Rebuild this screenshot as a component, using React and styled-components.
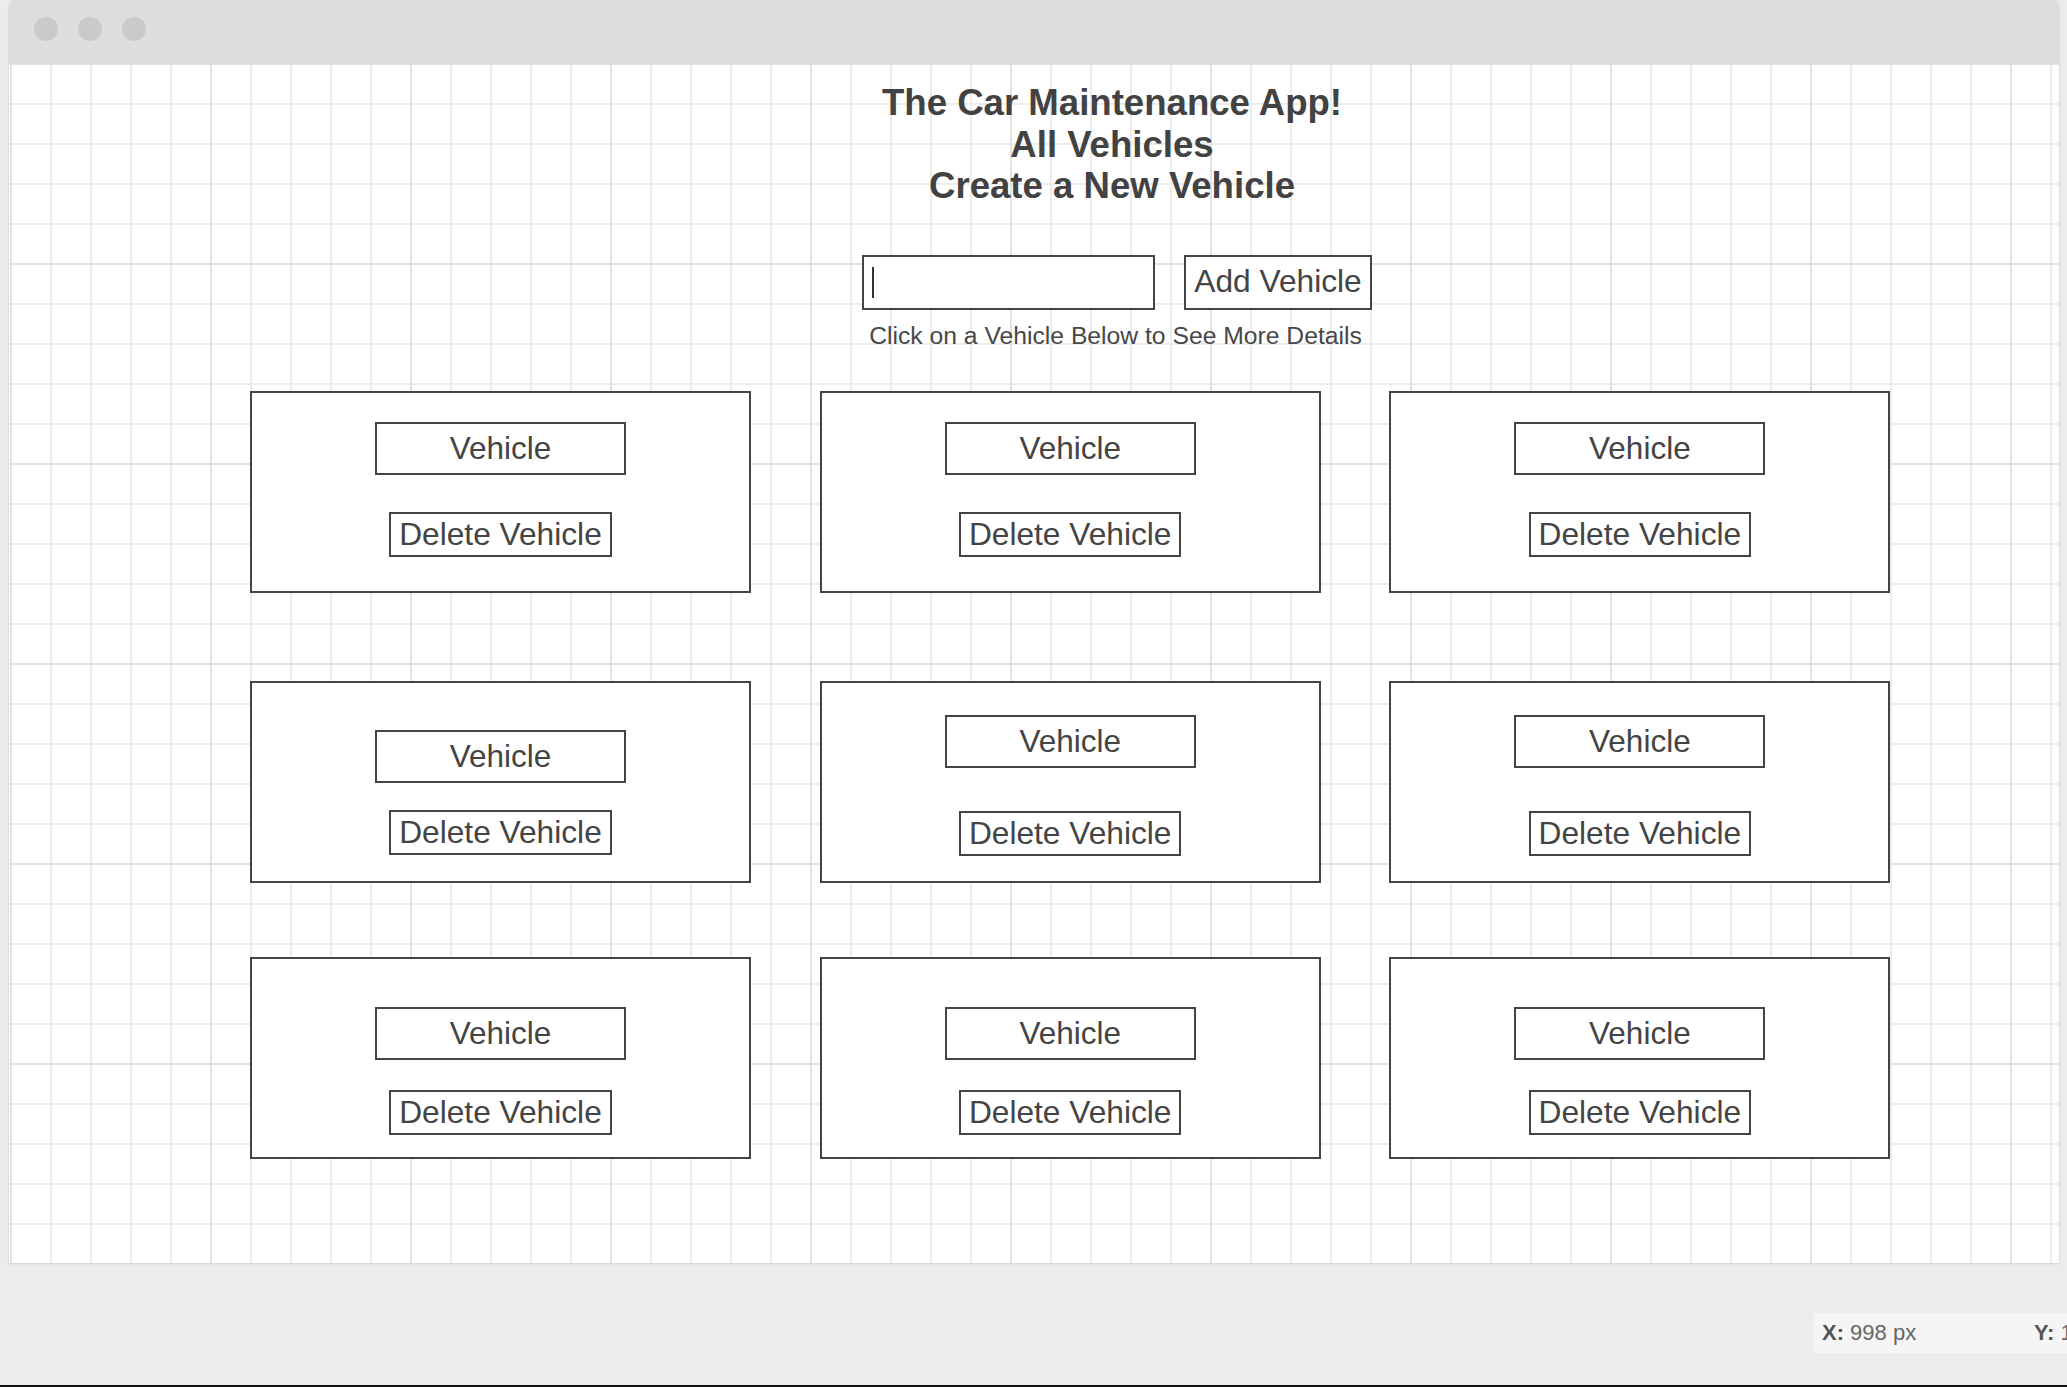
import React from "react";
import styled, { createGlobalStyle } from "styled-components";

const GlobalStyle = createGlobalStyle`
  html, body {
    margin: 0;
    padding: 0;
    background: #ececec;
    overflow: hidden;
  }
  * { box-sizing: border-box; }
  body {
    font-family: "Liberation Sans", Arial, sans-serif;
    color: #444;
  }
`;

const Page = styled.div`
  width: 2067px;
  height: 1387px;
  display: flex;
  flex-direction: column;
  background: #ececec;
`;

const Window = styled.div`
  margin-left: 9px;
  width: 2050px;
  height: 1263px;
  display: flex;
  flex-direction: column;
  border-radius: 6px 6px 0 0;
  overflow: hidden;
  background: #fff;
  box-shadow: 0 0 0 1px rgba(0, 0, 0, 0.03), 0 1px 3px rgba(0, 0, 0, 0.08);
`;

const TitleBar = styled.div`
  height: 63px;
  flex: none;
  background: #dddddd;
  display: flex;
  align-items: flex-start;
  padding: 17px 0 0 25px;
  gap: 20px;
`;

const Dot = styled.span`
  width: 24px;
  height: 24px;
  border-radius: 50%;
  background: #cacaca;
`;

const Canvas = styled.div`
  flex: 1;
  display: flex;
  flex-direction: column;
  padding-top: 19px;
  background-color: #fff;
  background-image:
    linear-gradient(to right, #e2e2e2 2px, transparent 2px),
    linear-gradient(to bottom, #e2e2e2 2px, transparent 2px),
    linear-gradient(to right, #ececec 2px, transparent 2px),
    linear-gradient(to bottom, #ececec 2px, transparent 2px);
  background-size: 200px 200px, 200px 200px, 40px 40px, 40px 40px;
  background-position: 1px 0, 1px 0, 1px 0, 1px 0;
`;

const Header = styled.header`
  display: flex;
  flex-direction: column;
  align-items: center;
  padding-left: 156px;
`;

const Title = styled.h1`
  margin: 0;
  font-size: 36.6px;
  line-height: 41.5px;
  font-weight: 700;
  text-align: center;
  color: #424242;
`;

const TitleLine = styled.span`
  display: block;
`;

const FormRow = styled.div`
  display: flex;
  gap: 29px;
  margin-top: 48px;
  margin-left: 10px;
`;

const TextField = styled.div`
  width: 293px;
  height: 55px;
  border: 2px solid #444;
  background: #fff;
  display: flex;
  align-items: center;
  padding-left: 8px;
`;

const Caret = styled.span`
  width: 2px;
  height: 31px;
  background: #333;
`;

const OutlineButton = styled.button`
  font-family: "Liberation Sans", Arial, sans-serif;
  font-size: 31.7px;
  color: #444;
  background: #fff;
  border: 2px solid #444;
  border-radius: 0;
  margin: 0;
  padding: 0 ${(p) => p.$px}px;
  display: flex;
  align-items: center;
  justify-content: center;
  height: ${(p) => p.$h}px;
  line-height: 1;
  white-space: nowrap;
`;

const Hint = styled.p`
  margin: 12px 0 0 7px;
  font-size: 24.7px;
  line-height: 28.4px;
  color: #474747;
`;

const CardGrid = styled.section`
  display: flex;
  flex-direction: column;
  margin-top: 41.5px;
  padding-left: 241px;
`;

const CardRow = styled.div`
  display: grid;
  grid-template-columns: repeat(3, 501px);
  column-gap: 68.7px;
  margin-top: ${(p) => p.$top}px;
`;

const Card = styled.div`
  height: 202px;
  border: 2px solid #444;
  background: #fff;
  display: flex;
  flex-direction: column;
  align-items: center;
  padding-top: ${(p) => p.$pad}px;
  gap: ${(p) => p.$gap}px;
`;

const VehicleBox = styled.div`
  width: 251px;
  height: 53px;
  border: 2px solid #444;
  display: flex;
  align-items: center;
  justify-content: center;
  font-size: 31.5px;
  color: #444;
  background: #fff;
`;

const Footer = styled.footer`
  flex: 1;
  display: flex;
  justify-content: flex-end;
  align-items: flex-start;
  padding-top: 50px;
`;

const Coords = styled.div`
  width: 253px;
  height: 40px;
  background: #f5f5f5;
  display: flex;
  align-items: center;
  padding-left: 8px;
  font-family: "Liberation Sans", Arial, sans-serif;
  font-size: 22px;
  color: #666;
  white-space: nowrap;
  overflow: hidden;
`;

const Coord = styled.span`
  flex: none;
  width: ${(p) => p.$w}px;
`;

const CoordLabel = styled.b`
  color: #555;
  font-weight: 700;
`;

const BottomBar = styled.div`
  height: 2px;
  flex: none;
  background: #111;
`;

const rows = [
  { top: 0, cards: [{ pad: 29, gap: 37 }, { pad: 29, gap: 37 }, { pad: 29, gap: 37 }] },
  { top: 88, cards: [{ pad: 47, gap: 27 }, { pad: 32, gap: 43 }, { pad: 32, gap: 43 }] },
  { top: 73.5, cards: [{ pad: 48, gap: 30 }, { pad: 48, gap: 30 }, { pad: 48, gap: 30 }] },
];

export default function App() {
  return (
    <>
      <GlobalStyle />
      <Page>
        <Window>
          <TitleBar>
            <Dot />
            <Dot />
            <Dot />
          </TitleBar>
          <Canvas>
            <Header>
              <Title>
                <TitleLine>The Car Maintenance App!</TitleLine>
                <TitleLine>All Vehicles</TitleLine>
                <TitleLine>Create a New Vehicle</TitleLine>
              </Title>
              <FormRow>
                <TextField>
                  <Caret />
                </TextField>
                <OutlineButton $h={55} $px={8}>Add Vehicle</OutlineButton>
              </FormRow>
              <Hint>Click on a Vehicle Below to See More Details</Hint>
            </Header>
            <CardGrid>
              {rows.map((row, r) => (
                <CardRow key={r} $top={row.top}>
                  {row.cards.map((c, i) => (
                    <Card key={i} $pad={c.pad} $gap={c.gap}>
                      <VehicleBox>Vehicle</VehicleBox>
                      <OutlineButton $h={45} $px={8}>Delete Vehicle</OutlineButton>
                    </Card>
                  ))}
                </CardRow>
              ))}
            </CardGrid>
          </Canvas>
        </Window>
        <Footer>
          <Coords>
            <Coord $w={212}>
              <CoordLabel>X:</CoordLabel> 998 px
            </Coord>
            <Coord $w={120}>
              <CoordLabel>Y:</CoordLabel> 1104 px
            </Coord>
          </Coords>
        </Footer>
        <BottomBar />
      </Page>
    </>
  );
}
